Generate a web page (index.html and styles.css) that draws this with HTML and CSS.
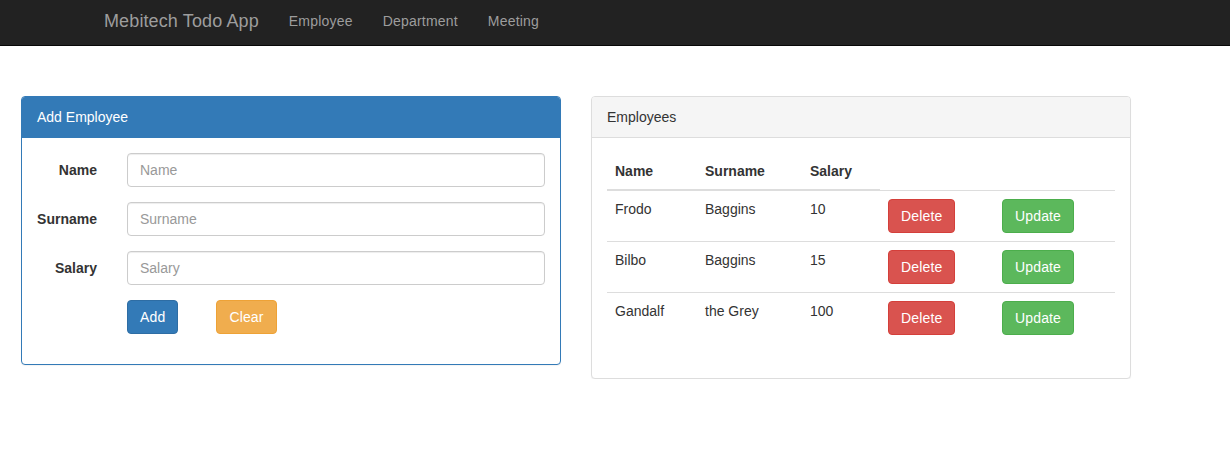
FILE: index.html
```html
<!DOCTYPE html>
<html>
<head>
<meta charset="utf-8">
<title>Mebitech Todo App</title>
<link rel="stylesheet" href="styles.css">
</head>
<body>
<nav class="navbar">
  <a class="brand" href="#">Mebitech Todo App</a>
  <a class="nav-link" href="#">Employee</a>
  <a class="nav-link" href="#">Department</a>
  <a class="nav-link" href="#">Meeting</a>
</nav>
<main class="content">
  <section class="panel panel-primary">
    <div class="panel-heading">Add Employee</div>
    <div class="panel-body">
      <form class="form">
        <div class="form-group">
          <label class="label">Name</label>
          <div class="field"><input class="input" type="text" placeholder="Name"></div>
        </div>
        <div class="form-group">
          <label class="label">Surname</label>
          <div class="field"><input class="input" type="text" placeholder="Surname"></div>
        </div>
        <div class="form-group">
          <label class="label">Salary</label>
          <div class="field"><input class="input" type="text" placeholder="Salary"></div>
        </div>
        <div class="form-group">
          <div class="label"></div>
          <div class="field actions">
            <button type="button" class="btn btn-primary">Add</button>
            <button type="button" class="btn btn-warning">Clear</button>
          </div>
        </div>
      </form>
    </div>
  </section>
  <section class="panel panel-default">
    <div class="panel-heading">Employees</div>
    <div class="panel-body">
      <table class="table">
        <colgroup>
          <col class="c-name"><col class="c-surname"><col class="c-salary"><col class="c-del"><col>
        </colgroup>
        <thead>
          <tr><th>Name</th><th>Surname</th><th>Salary</th></tr>
        </thead>
        <tbody>
          <tr><td>Frodo</td><td>Baggins</td><td>10</td><td><button type="button" class="btn btn-danger">Delete</button></td><td><button type="button" class="btn btn-success">Update</button></td></tr>
          <tr><td>Bilbo</td><td>Baggins</td><td>15</td><td><button type="button" class="btn btn-danger">Delete</button></td><td><button type="button" class="btn btn-success">Update</button></td></tr>
          <tr><td>Gandalf</td><td>the Grey</td><td>100</td><td><button type="button" class="btn btn-danger">Delete</button></td><td><button type="button" class="btn btn-success">Update</button></td></tr>
        </tbody>
      </table>
    </div>
  </section>
</main>
</body>
</html>
```

FILE: styles.css
```css
* { box-sizing: border-box; }
html, body {
  margin: 0;
  padding: 0;
  background: #fff;
  font-family: "Liberation Sans", Arial, Helvetica, sans-serif;
  font-size: 14px;
  line-height: 20px;
  color: #333;
}

.navbar {
  height: 46px;
  background: #222;
  border-bottom: 1px solid #080808;
  display: flex;
  align-items: center;
  padding-left: 104px;
}
.navbar a { text-decoration: none; color: #9d9d9d; }
.brand {
  font-size: 18px;
  line-height: 20px;
  padding-right: 15px;
  margin-top: -3px;
  letter-spacing: 0.12px;
}
.nav-link {
  font-size: 14px;
  padding: 0 15px;
  margin-top: -4px;
  letter-spacing: 0.2px;
}

.content {
  display: flex;
  align-items: flex-start;
  gap: 30px;
  padding: 50px 0 0 21px;
}

.panel {
  width: 540px;
  border: 1px solid #ddd;
  border-radius: 4px;
  background: #fff;
  box-shadow: 0 1px 1px rgba(0,0,0,.05);
}
.panel-heading {
  padding: 10px 15px;
  border-bottom: 1px solid #ddd;
  border-radius: 3px 3px 0 0;
  line-height: 20px;
}
.panel-primary { border-color: #337ab7; }
.panel-primary .panel-heading { background: #337ab7; color: #fff; border-color: #337ab7; }
.panel-default .panel-heading { background: #f5f5f5; color: #333; }
.panel-body { padding: 15px; }

.form-group {
  display: flex;
  margin: 0 -15px 15px;
}
.label {
  width: 90px;
  padding: 7px 15px 0;
  text-align: right;
  font-weight: bold;
}
.field {
  flex: 1;
  padding: 0 15px;
}
.input {
  display: block;
  width: 100%;
  height: 34px;
  padding: 6px 12px;
  font-family: inherit;
  font-size: 14px;
  line-height: 20px;
  color: #555;
  background: #fff;
  border: 1px solid #ccc;
  border-radius: 4px;
  box-shadow: inset 0 1px 1px rgba(0,0,0,.075);
}
.input::placeholder { color: #999; }

.actions { display: flex; gap: 38px; }

.btn {
  display: inline-block;
  height: 34px;
  padding: 6px 12px;
  font-family: inherit;
  font-size: 14px;
  line-height: 20px;
  border: 1px solid transparent;
  border-radius: 4px;
  color: #fff;
  cursor: pointer;
  letter-spacing: 0.15px;
}
.btn-primary { background: #337ab7; border-color: #2e6da4; }
.btn-warning { background: #f0ad4e; border-color: #eea236; }
.btn-danger { background: #d9534f; border-color: #d43f3a; }
.btn-success { background: #5cb85c; border-color: #4cae4c; }

.table {
  width: 100%;
  border-collapse: collapse;
  border-spacing: 0;
  margin-bottom: 20px;
}
.c-name { width: 90px; }
.c-surname { width: 105px; }
.c-salary { width: 78px; }
.c-del { width: 114px; }
.table th {
  text-align: left;
  padding: 8px;
  line-height: 20px;
  font-weight: bold;
  vertical-align: bottom;
  border-bottom: 2px solid #ddd;
}
.table td {
  padding: 8px;
  line-height: 20px;
  vertical-align: top;
  border-top: 1px solid #ddd;
}
```
